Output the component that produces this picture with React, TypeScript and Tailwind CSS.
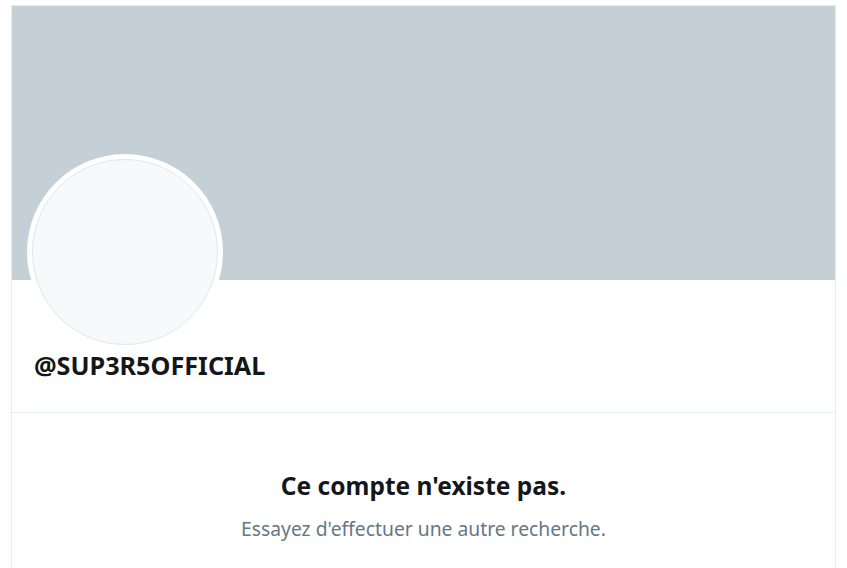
import React from "react";

export default function App() {
  return (
    <div className="w-[847px] h-[568px] bg-white overflow-hidden" style={{ fontFamily: '"Noto Sans", "Open Sans", sans-serif' }}>
      <div className="pt-[5px] pl-[11px] pr-[11px] h-full">
        <div className="border-x border-t border-[#e6ecf0] h-full">
          <div className="relative h-[274px] bg-[#c4cfd6]">
            <div className="absolute left-[15px] top-[148px] w-[196px] h-[196px] rounded-full bg-white p-[5px]">
              <div className="w-full h-full rounded-full bg-[#f7f9fa] border border-[#e1e8ed]" />
            </div>
          </div>
          <div className="h-[133px] border-b border-[#e6ecf0] pl-[22px] pt-[69px]">
            <div className="text-[25.2px] leading-[32px] font-bold text-[#14171a]">@SUP3R5OFFICIAL</div>
          </div>
          <div className="flex flex-col items-center pt-[57px]">
            <div className="text-[24.5px] leading-[32px] font-bold text-[#14171a]">Ce compte n'existe pas.</div>
            <div className="mt-[14px] text-[19.3px] leading-[26px] text-[#657786]">Essayez d'effectuer une autre recherche.</div>
          </div>
        </div>
      </div>
    </div>
  );
}
